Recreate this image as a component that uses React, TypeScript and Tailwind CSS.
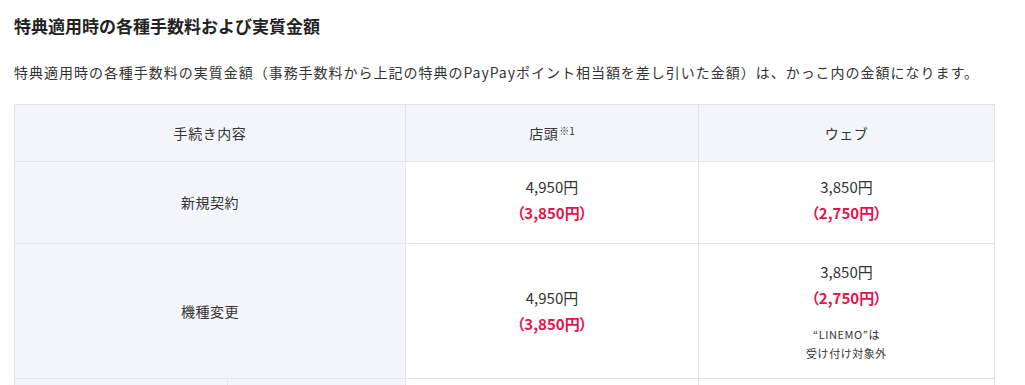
import React from 'react';

const font = "font-['Noto_Sans_CJK_JP','Noto_Sans',sans-serif]";

const Price = ({ base, net }: { base: string; net: string }) => (
  <>
    <div className="text-[15px] leading-[26px] text-[#333]">{base}</div>
    <div className="text-[15px] leading-[26px] font-bold text-[#e5144b] [font-feature-settings:'palt']">（{net}）</div>
  </>
);

const App: React.FC = () => {
  return (
    <div className={`${font} bg-white w-[1025px] h-[385px] overflow-hidden px-[14px] pt-[14px] text-[#333]`}>
      <h2 className="text-[17px] leading-[24px] font-bold text-[#222]">
        特典適用時の各種手数料および実質金額
      </h2>

      <p className="mt-[22px] text-[14px] leading-[24px] tracking-[0.07em]">
        特典適用時の各種手数料の実質金額（事務手数料から上記の特典のPayPayポイント相当額を差し引いた金額）は、かっこ内の金額になります。
      </p>

      <table className="mt-[20px] w-[980px] table-fixed border-collapse text-center">
        <colgroup>
          <col className="w-[213px]" />
          <col className="w-[178px]" />
          <col className="w-[293px]" />
          <col className="w-[296px]" />
        </colgroup>
        <thead>
          <tr className="h-[57px] bg-[#f4f5f8] text-[14px] tracking-[0.04em]">
            <th colSpan={2} className="border border-[#e2e4e8] font-normal">手続き内容</th>
            <th className="border border-[#e2e4e8] font-normal">
              店頭<sup className="text-[10px] top-[-0.4em] ml-[1px] tracking-normal">※1</sup>
            </th>
            <th className="border border-[#e2e4e8] font-normal">ウェブ</th>
          </tr>
        </thead>
        <tbody>
          <tr className="h-[82px]">
            <td colSpan={2} className="border border-[#e2e4e8] bg-[#f4f5f8] text-[14px] tracking-[0.04em]">新規契約</td>
            <td className="border border-[#e2e4e8] pt-[11px] pb-[17px]">
              <Price base="4,950円" net="3,850円" />
            </td>
            <td className="border border-[#e2e4e8] pt-[11px] pb-[17px]">
              <Price base="3,850円" net="2,750円" />
            </td>
          </tr>
          <tr className="h-[135px]">
            <td colSpan={2} className="border border-[#e2e4e8] bg-[#f4f5f8] text-[14px] tracking-[0.04em]">機種変更</td>
            <td className="border border-[#e2e4e8]">
              <Price base="4,950円" net="3,850円" />
            </td>
            <td className="border border-[#e2e4e8] pt-[13px] pb-[14px]">
              <Price base="3,850円" net="2,750円" />
              <div className="mt-[14px] text-[11px] leading-[19px] tracking-[0.05em] text-[#333]">
                “LINEMO”は
                <br />
                受け付け対象外
              </div>
            </td>
          </tr>
          <tr className="h-[40px]">
            <td className="border border-[#e2e4e8] bg-[#f4f5f8]"></td>
            <td className="border border-[#e2e4e8] bg-[#f4f5f8]"></td>
            <td className="border border-[#e2e4e8]"></td>
            <td className="border border-[#e2e4e8]"></td>
          </tr>
        </tbody>
      </table>
    </div>
  );
};

export default App;
